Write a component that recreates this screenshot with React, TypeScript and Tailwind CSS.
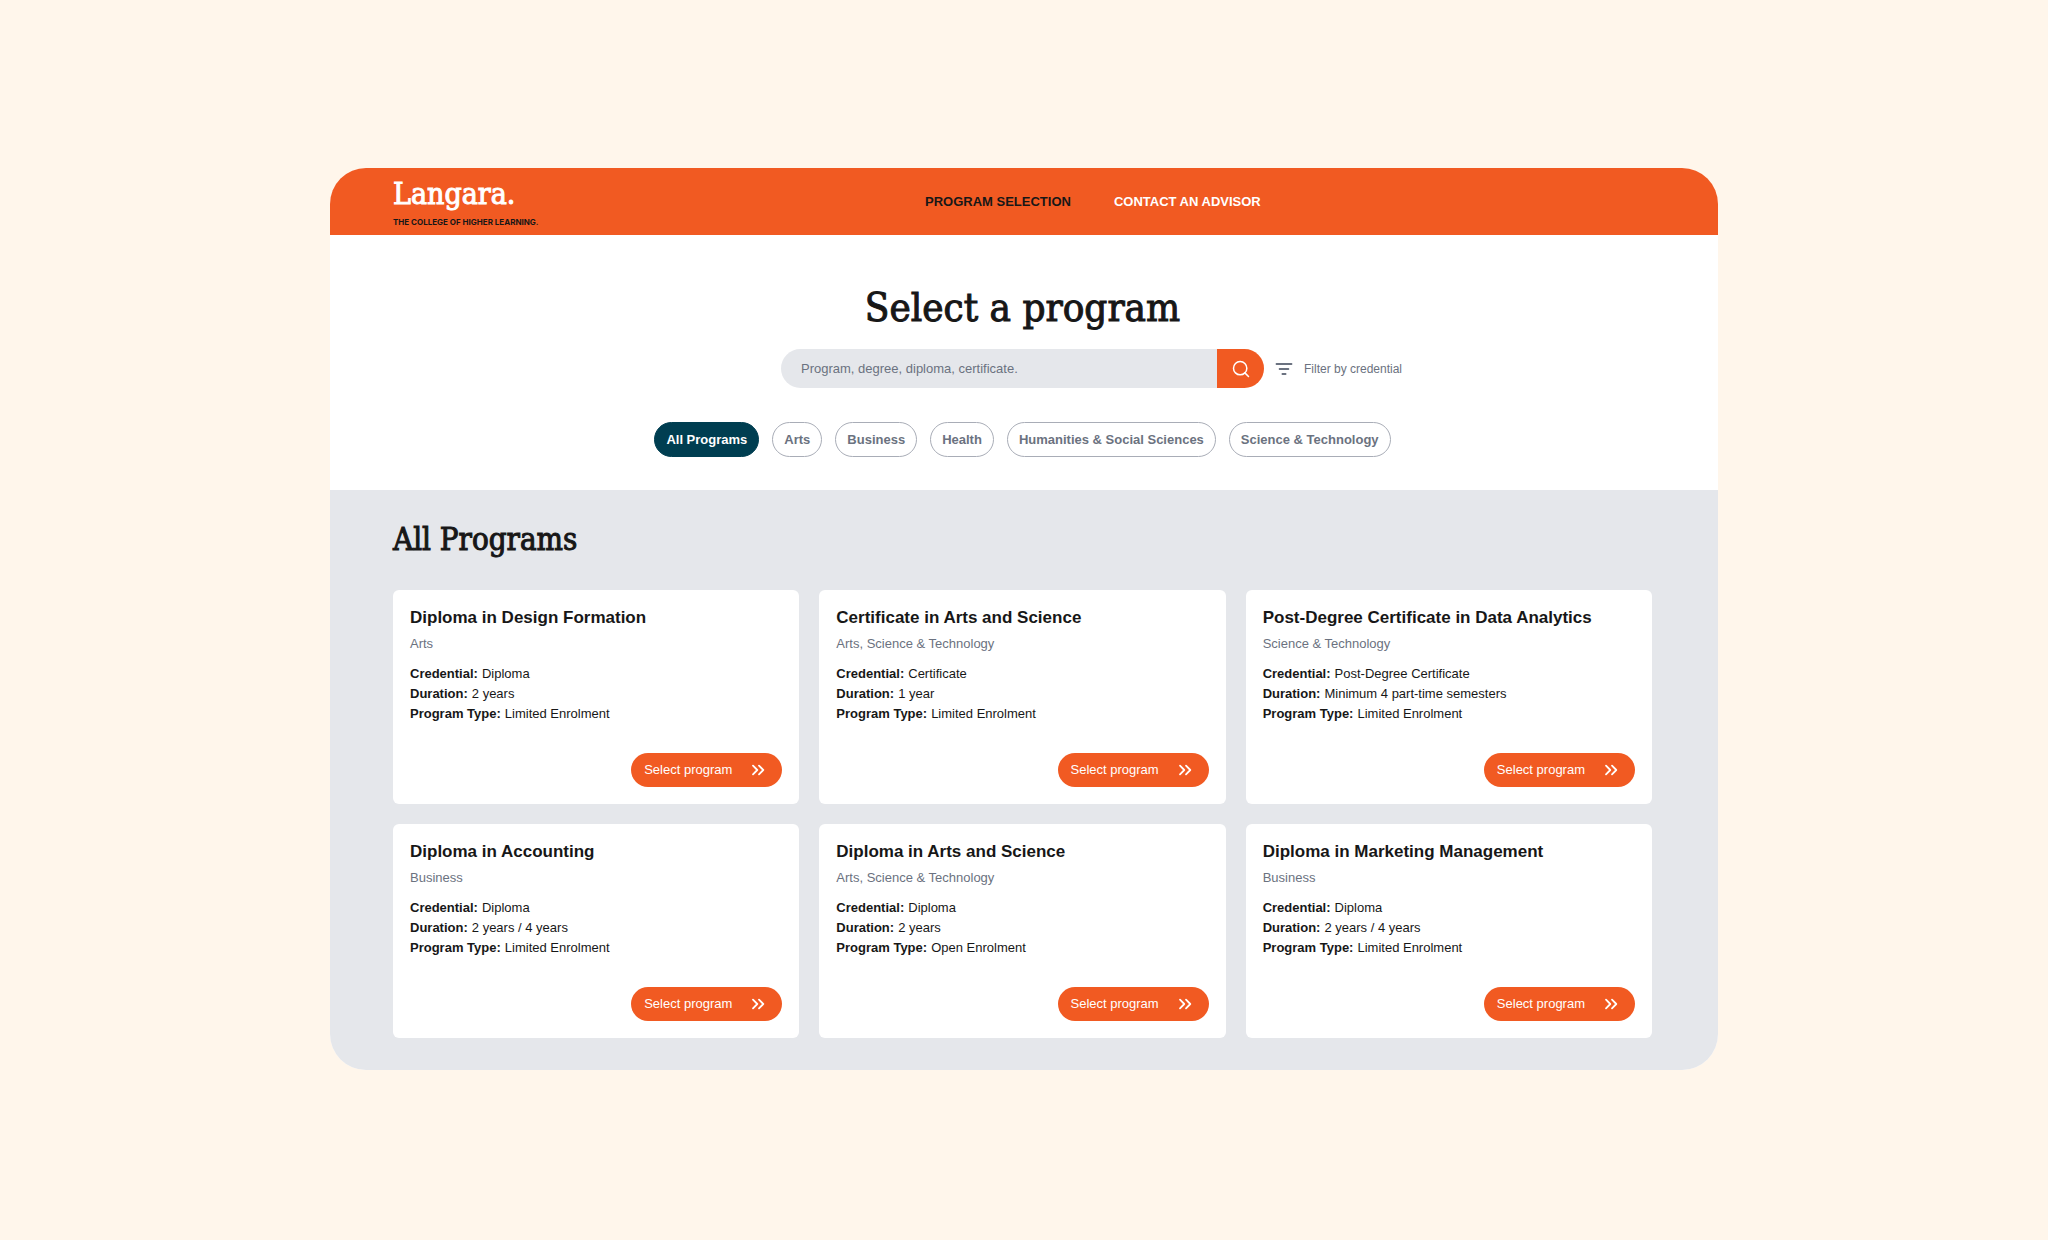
import { Search } from "lucide-react";

type Program = {
  title: string;
  area: string;
  credential: string;
  duration: string;
  type: string;
};

const categories = [
  "All Programs",
  "Arts",
  "Business",
  "Health",
  "Humanities & Social Sciences",
  "Science & Technology",
];

const programs: Program[] = [
  { title: "Diploma in Design Formation", area: "Arts", credential: "Diploma", duration: "2 years", type: "Limited Enrolment" },
  { title: "Certificate in Arts and Science", area: "Arts, Science & Technology", credential: "Certificate", duration: "1 year", type: "Limited Enrolment" },
  { title: "Post-Degree Certificate in Data Analytics", area: "Science & Technology", credential: "Post-Degree Certificate", duration: "Minimum 4 part-time semesters", type: "Limited Enrolment" },
  { title: "Diploma in Accounting", area: "Business", credential: "Diploma", duration: "2 years / 4 years", type: "Limited Enrolment" },
  { title: "Diploma in Arts and Science", area: "Arts, Science & Technology", credential: "Diploma", duration: "2 years", type: "Open Enrolment" },
  { title: "Diploma in Marketing Management", area: "Business", credential: "Diploma", duration: "2 years / 4 years", type: "Limited Enrolment" },
];

function DoubleChevron() {
  return (
    <svg width="14" height="12" viewBox="0 0 14 12" fill="none" stroke="currentColor" strokeWidth="1.8" strokeLinecap="round" strokeLinejoin="round" aria-hidden="true">
      <path d="M2 1.7 6.3 6 2 10.3M8 1.7 12.3 6 8 10.3" />
    </svg>
  );
}

function FilterIcon() {
  return (
    <svg width="18" height="14" viewBox="0 0 18 14" fill="none" stroke="currentColor" strokeWidth="1.8" strokeLinecap="round" aria-hidden="true">
      <path d="M1.5 2h15M4.6 7h8.8M7.4 12h3.2" />
    </svg>
  );
}

function Detail({ label, value }: { label: string; value: string }) {
  return (
    <div className="flex gap-1">
      <dt className="font-bold">{label}:</dt>
      <dd>{value}</dd>
    </div>
  );
}

function ProgramCard({ program }: { program: Program }) {
  return (
    <article className="flex flex-col rounded-md bg-white px-[17px] pt-4 pb-[17px]">
      <h3 className="text-[17px] leading-6 font-bold">{program.title}</h3>
      <p className="mt-1 text-[13px] leading-5 text-[#6b7280]">{program.area}</p>
      <dl className="mt-2.5 text-[13px] leading-5">
        <Detail label="Credential" value={program.credential} />
        <Detail label="Duration" value={program.duration} />
        <Detail label="Program Type" value={program.type} />
      </dl>
      <button type="button" className="mt-[29px] flex h-[34px] items-center gap-[19px] self-end rounded-full bg-[#f15a22] pr-[17px] pl-[13px] text-[13px] text-white">
        Select program
        <DoubleChevron />
      </button>
    </article>
  );
}

export default function App() {
  return (
    <div className="flex min-h-screen items-center justify-center bg-[#fff6eb] px-6 pb-0.5 font-['Liberation_Sans',Arial,sans-serif] text-[#171717]">
      <div className="w-full max-w-[1388px] overflow-hidden rounded-[36px] bg-white">
        <header className="grid h-[67px] grid-cols-[532fr_729fr] items-center bg-[#f15a22] pr-16 pl-[63px]">
          <a href="#" className="block">
            <span className="block font-['DejaVu_Serif_Condensed','DejaVu_Serif',serif] text-[30px] leading-8 text-white [-webkit-text-stroke:1px]">Langara.</span>
            <span className="mt-2 block font-['Inter',sans-serif] text-[8px] leading-2 font-bold">THE COLLEGE OF HIGHER LEARNING.</span>
          </a>
          <nav className="flex gap-[43px] text-[13px] font-bold">
            <a href="#programs">PROGRAM SELECTION</a>
            <a href="#advisor" className="text-white">CONTACT AN ADVISOR</a>
          </nav>
        </header>

        <section className="pt-[46px] pr-[3px] pb-[33px]">
          <h1 className="text-center font-['DejaVu_Serif_Condensed','DejaVu_Serif',serif] text-[40px] leading-[52px] [-webkit-text-stroke:1px]">Select a program</h1>
          <div className="mt-4 grid grid-cols-[1fr_483px_1fr] items-center gap-[11px]">
            <form className="col-start-2 flex h-[39px] overflow-hidden rounded-full" onSubmit={(e) => e.preventDefault()}>
              <input
                type="search"
                aria-label="Search programs"
                placeholder="Program, degree, diploma, certificate."
                className="min-w-0 flex-1 bg-[#e5e7eb] px-5 text-[13px] outline-none placeholder:text-[#6b7280]"
              />
              <button type="submit" aria-label="Search" className="flex w-[47px] items-center justify-center bg-[#f15a22] text-white">
                <Search size={20} strokeWidth={1.8} />
              </button>
            </form>
            <button type="button" className="flex items-center gap-[11px] justify-self-start text-xs text-[#6b7280]">
              <FilterIcon />
              Filter by credential
            </button>
          </div>
          <div className="mt-[34px] flex flex-wrap justify-center gap-[13px]">
            {categories.map((c, i) => (
              <button
                key={c}
                type="button"
                aria-pressed={i === 0}
                className={
                  i === 0
                    ? "h-[35px] rounded-full border border-[#003e51] bg-[#003e51] px-[11px] text-[13px] font-bold text-white"
                    : "h-[35px] rounded-full border border-[#a9adb7] px-[11px] text-[13px] font-bold text-[#6b7280]"
                }
              >
                {c}
              </button>
            ))}
          </div>
        </section>

        <section id="programs" className="bg-[#e5e7eb] pt-[29px] pr-[66px] pb-8 pl-[63px]">
          <h2 className="font-['DejaVu_Serif_Condensed','DejaVu_Serif',serif] text-[31px] leading-10 [-webkit-text-stroke:1px]">All Programs</h2>
          <div className="mt-[31px] grid grid-cols-3 gap-5">
            {programs.map((p) => (
              <ProgramCard key={p.title} program={p} />
            ))}
          </div>
        </section>
      </div>
    </div>
  );
}
